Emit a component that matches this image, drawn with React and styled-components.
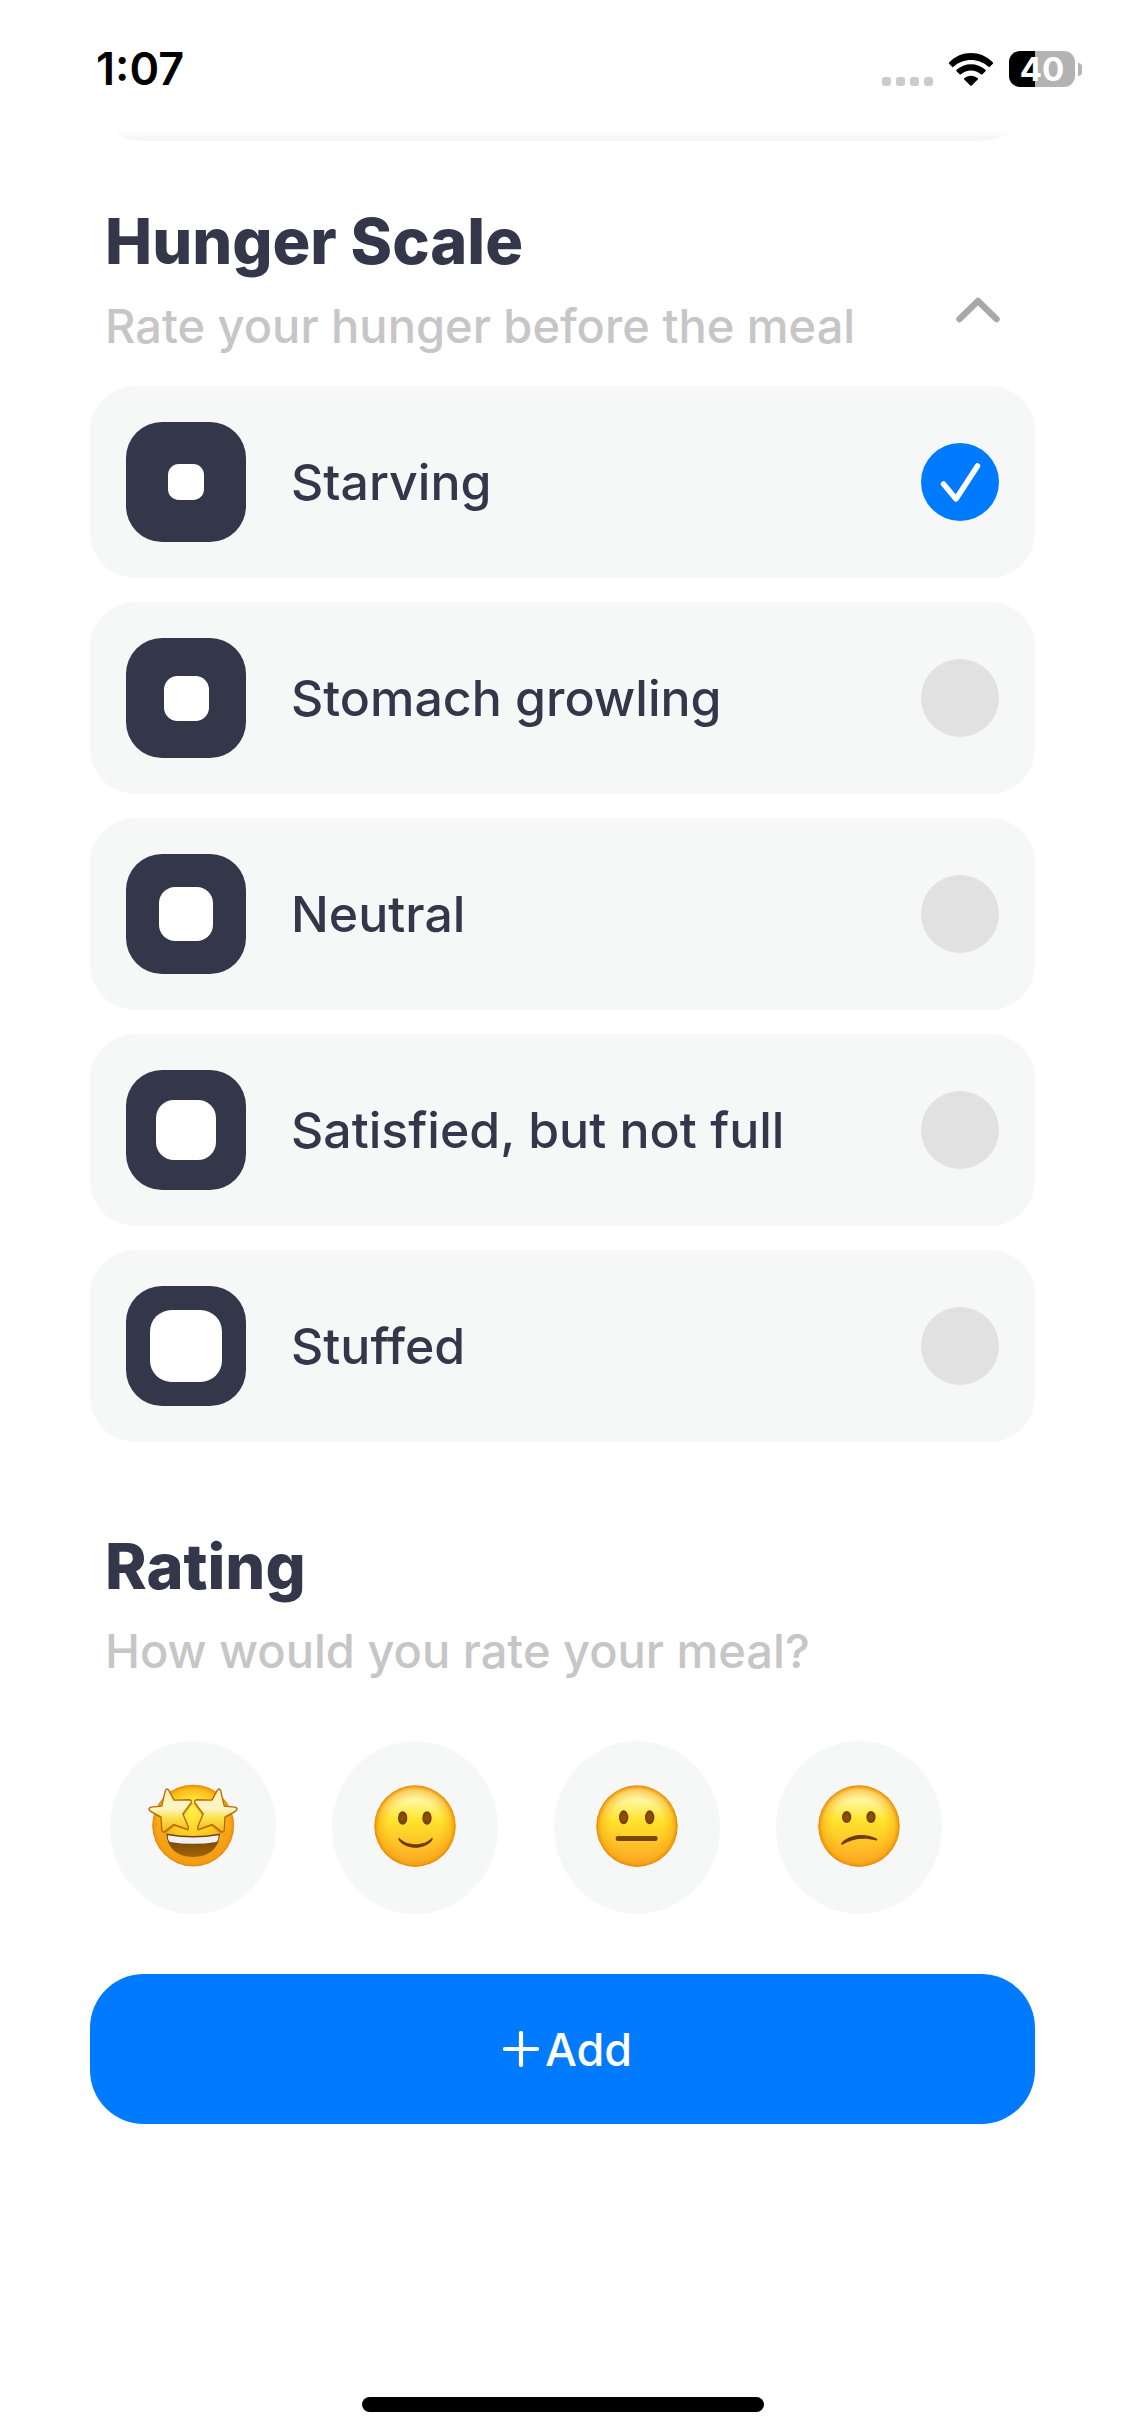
import React, { useState } from "react";
import styled, { createGlobalStyle } from "styled-components";

const colors = {
  ink: "#34364a",
  muted: "#c6c6c6",
  card: "#f6f8f8",
  off: "#e1e1e1",
  blue: "#007aff",
};

const GlobalStyle = createGlobalStyle`
  * {
    box-sizing: border-box;
  }
  body {
    margin: 0;
    background: #fff;
    font-family: Inter, "Liberation Sans", sans-serif;
    color: ${colors.ink};
  }
  button {
    font: inherit;
    border: 0;
    cursor: pointer;
  }
`;

const Screen = styled.div`
  display: flex;
  flex-direction: column;
  min-height: 100vh;
`;

const StatusBar = styled.header`
  display: flex;
  align-items: center;
  justify-content: space-between;
  padding: 36px 43px 30px 96px;
  color: #000;
`;

const Clock = styled.time`
  font-size: 45px;
  font-weight: 600;
  line-height: 66px;
`;

const StatusIcons = styled.div`
  display: flex;
  align-items: center;
  gap: 15px;
`;

const Signal = styled.div`
  display: flex;
  align-items: flex-end;
  gap: 5px;
  height: 33px;
`;

const SignalDot = styled.span`
  width: 9px;
  height: 9px;
  border-radius: 3px;
  background: #cbcbcb;
`;

const Battery = styled.div`
  display: flex;
  align-items: center;
  gap: 3px;
`;

const BatteryBody = styled.div`
  width: 66px;
  height: 36px;
  border-radius: 11px;
  background: linear-gradient(90deg, #000 ${(p) => p.$level}%, #b3b3b3 ${(p) => p.$level}%);
  color: #fff;
  font-size: 33px;
  font-weight: 700;
  line-height: 36px;
  text-align: center;
`;

const BatteryTip = styled.span`
  width: 4px;
  height: 13px;
  border-radius: 0 4px 4px 0;
  background: #b3b3b3;
`;

const Content = styled.main`
  display: flex;
  flex-direction: column;
  gap: 60px;
  padding: 0 90px;
`;

// bottom edge of the card that is scrolled under the status bar
const ScrolledCard = styled.div`
  height: 9px;
  overflow: hidden;
  display: flex;
  align-items: flex-end;

  &::before {
    content: "";
    flex: 1;
    height: 108px;
    border-radius: 54px;
    background: linear-gradient(0deg, ${colors.card} 4px, #fff 12px);
  }
`;

const Section = styled.section`
  display: flex;
  flex-direction: column;
  gap: ${(p) => p.$gap}px;
`;

const SectionHead = styled.div`
  display: flex;
  align-items: flex-end;
  justify-content: space-between;
  padding: 0 15px;
`;

const Headings = styled.div`
  display: flex;
  flex-direction: column;
  gap: 15px;
`;

const Title = styled.h2`
  margin: 0;
  font-size: 63px;
  font-weight: 800;
  line-height: 80px;
`;

const Subtitle = styled.p`
  margin: 0;
  font-size: 47px;
  font-weight: 500;
  line-height: 60px;
  color: ${colors.muted};
`;

const CollapseButton = styled.button`
  display: flex;
  align-items: center;
  justify-content: center;
  width: 84px;
  height: 92px;
  padding: 0;
  background: none;
  color: #a7a8ac;
`;

const Options = styled.div`
  display: flex;
  flex-direction: column;
  gap: 24px;
  margin-bottom: 24px;
`;

const Option = styled.label`
  display: flex;
  align-items: center;
  gap: 45px;
  padding: 36px;
  border-radius: 45px;
  background: ${colors.card};
  cursor: pointer;
`;

const LevelTile = styled.span`
  display: flex;
  align-items: center;
  justify-content: center;
  width: 120px;
  height: 120px;
  border-radius: 36px;
  background: ${colors.ink};

  &::before {
    content: "";
    width: ${(p) => p.$size}px;
    height: ${(p) => p.$size}px;
    border-radius: 30%;
    background: #fff;
  }
`;

const OptionName = styled.span`
  flex: 1;
  font-size: 50px;
  font-weight: 500;
  line-height: 66px;
`;

const RadioWrap = styled.span`
  display: grid;
  place-items: center;

  > * {
    grid-area: 1 / 1;
  }
`;

const Radio = styled.input`
  appearance: none;
  width: 78px;
  height: 78px;
  margin: 0;
  border-radius: 50%;
  background: ${colors.off};

  &:checked {
    background: ${colors.blue};
  }
`;

const Tick = styled.svg`
  width: 78px;
  height: 78px;
  pointer-events: none;
`;

const Ratings = styled.div`
  display: flex;
  gap: 56px;
  padding: 0 20px;
`;

const RatingButton = styled.button`
  display: flex;
  align-items: center;
  justify-content: center;
  width: 166px;
  height: 173px;
  padding: 0 0 4px;
  border-radius: 50%;
  background: ${colors.card};
`;

const AddButton = styled.button`
  display: flex;
  align-items: center;
  justify-content: center;
  gap: 6px;
  height: 150px;
  padding: 0 0 0 10px;
  border-radius: 54px;
  background: ${colors.blue};
  color: #fff;
  font-size: 45px;
  font-weight: 500;
`;

const HomeBar = styled.div`
  width: 402px;
  height: 15px;
  margin: auto auto 24px;
  border-radius: 8px;
  background: #000;
`;

const WifiIcon = () => (
  <svg width="46" height="33" viewBox="0 0 134 98" fill="#000" aria-hidden="true">
    <path d="M2 28Q0 30 2 32L11 41Q13 43 15 41C44 14 90 14 119 41Q121 43 123 41L132 32Q134 30 132 28C96 -9 38 -9 2 28Z" />
    <path d="M24 50Q22 52 24 54L33 63Q35 65 37 63C54 48 80 48 97 63Q99 65 101 63L110 54Q112 52 110 50C86 28 48 28 24 50Z" />
    <path d="M47 75Q45 77 47 79L64 96Q67 99 70 96L87 79Q89 77 87 75C76 65 58 65 47 75Z" />
  </svg>
);

const ChevronUp = () => (
  <svg width="44" height="26" viewBox="0 0 44 26" fill="none" aria-hidden="true">
    <path d="M3.5 22L22 4L40.5 22" stroke="currentColor" strokeWidth="6.5" strokeLinecap="round" strokeLinejoin="round" />
  </svg>
);

const PlusIcon = () => (
  <svg width="36" height="36" viewBox="0 0 36 36" aria-hidden="true">
    <path d="M18 2V34M2 18H34" stroke="currentColor" strokeWidth="4.2" strokeLinecap="round" />
  </svg>
);

const FaceGradients = () => (
  <svg width="0" height="0" display="block" aria-hidden="true">
    <defs>
      <linearGradient id="skin" x1="0" y1="0" x2="0" y2="1">
        <stop offset="0" stopColor="#fff9b8" />
        <stop offset="0.18" stopColor="#fff7a2" />
        <stop offset="0.42" stopColor="#ffe52e" />
        <stop offset="0.7" stopColor="#ffc426" />
        <stop offset="1" stopColor="#fda62c" />
      </linearGradient>
      <radialGradient id="rim">
        <stop offset="0.65" stopColor="#f9ab10" stopOpacity="0" />
        <stop offset="0.88" stopColor="#f9a812" stopOpacity="0.5" />
        <stop offset="0.96" stopColor="#f09a0e" stopOpacity="0.9" />
        <stop offset="1" stopColor="#e3830a" />
      </radialGradient>
      <radialGradient id="eye">
        <stop offset="0.2" stopColor="#935200" />
        <stop offset="1" stopColor="#6e3c04" />
      </radialGradient>
      <linearGradient id="star" x1="0" y1="0" x2="0" y2="1">
        <stop offset="0" stopColor="#ffeeb0" />
        <stop offset="0.45" stopColor="#fdf6c4" />
        <stop offset="0.7" stopColor="#fbde44" />
        <stop offset="1" stopColor="#f0b81c" />
      </linearGradient>
      <radialGradient id="glow" cx="0.5" cy="0.3" r="0.7">
        <stop offset="0" stopColor="#fff04a" />
        <stop offset="0.45" stopColor="#fbcf20" />
        <stop offset="0.7" stopColor="#f5a31a" />
        <stop offset="1" stopColor="#ee8a1a" />
      </radialGradient>
      <linearGradient id="mouth" x1="0" y1="0" x2="0" y2="1">
        <stop offset="0" stopColor="#6b3d00" />
        <stop offset="1" stopColor="#a26408" />
      </linearGradient>
    </defs>
  </svg>
);

const Face = ({ eyeX, eyeY, eyeR, children }) => (
  <svg width="82" height="82" viewBox="0 0 246 246" aria-hidden="true">
    <circle cx="123" cy="123" r="122" fill="url(#skin)" />
    <circle cx="123" cy="123" r="122" fill="url(#rim)" />
    {eyeX.map((x) => (
      <ellipse key={x} cx={x} cy={eyeY} rx="14" ry={eyeR} fill="url(#eye)" />
    ))}
    {children}
  </svg>
);

const SmileFace = () => (
  <Face eyeX={[86, 159]} eyeY={99} eyeR={20}>
    <path d="M75 158C98 184 151 184 174 158C177 160 176 164 173 168C150 195 99 195 76 168C73 164 72 160 75 158Z" fill="#6b3a02" />
  </Face>
);

const NeutralFace = () => (
  <Face eyeX={[83, 161]} eyeY={97} eyeR={21}>
    <rect x="59" y="153" width="126" height="15" rx="7" fill="#7b4503" />
  </Face>
);

const ConfusedFace = () => (
  <Face eyeX={[86, 159]} eyeY={96} eyeR={18}>
    <path d="M71 180C68 178 70 173 76 168C105 145 148 145 177 161C179 165 176 167 173 166C140 157 105 159 71 180Z" fill="#6b3a02" />
  </Face>
);

const starPath =
  "M52 19Q57 11 62 19L78 48L123 47Q133 49 128 57L104 89L120 127Q122 137 113 134L77 121L50 142Q42 146 41 137L39 99L8 82Q-3 74 9 69L41 66Z";

const StarFace = () => (
  <svg width="90" height="83" viewBox="0 0 269 248" aria-hidden="true">
    <circle cx="135" cy="124" r="122" fill="url(#glow)" />
    <circle cx="135" cy="124" r="122" fill="url(#rim)" />
    <path d="M55 148Q135 163 215 148C212 196 178 218 135 218C92 218 58 196 55 148Z" fill="url(#mouth)" />
    <path d="M59 153Q135 167 211 153Q211 168 204 173Q135 184 66 173Q59 168 59 153Z" fill="#f1f1f5" />
    <g fill="#8a4a00" opacity="0.35">
      <path d={starPath} transform="translate(3 5)" />
      <path d={starPath} transform="translate(266 5) scale(-1 1)" />
    </g>
    <g fill="url(#star)" stroke="#b8690c" strokeWidth="4" strokeLinejoin="round">
      <path d={starPath} />
      <path d={starPath} transform="translate(269 0) scale(-1 1)" />
    </g>
  </svg>
);

const hungerLevels = [
  { name: "Starving", size: 36 },
  { name: "Stomach growling", size: 45 },
  { name: "Neutral", size: 54 },
  { name: "Satisfied, but not full", size: 60 },
  { name: "Stuffed", size: 72 },
];

const ratings = [
  { name: "Amazing", Icon: StarFace },
  { name: "Good", Icon: SmileFace },
  { name: "Okay", Icon: NeutralFace },
  { name: "Bad", Icon: ConfusedFace },
];

const App = () => {
  const [hunger, setHunger] = useState("Starving");
  const [open, setOpen] = useState(true);

  return (
    <Screen>
      <GlobalStyle />
      <StatusBar>
        <Clock>1:07</Clock>
        <StatusIcons>
          <Signal>
            <SignalDot />
            <SignalDot />
            <SignalDot />
            <SignalDot />
          </Signal>
          <WifiIcon />
          <Battery>
            <BatteryBody $level={40}>40</BatteryBody>
            <BatteryTip />
          </Battery>
        </StatusIcons>
      </StatusBar>

      <Content>
        <ScrolledCard />

        <Section $gap={30}>
          <SectionHead>
            <Headings>
              <Title>Hunger Scale</Title>
              <Subtitle>Rate your hunger before the meal</Subtitle>
            </Headings>
            <CollapseButton aria-label="Toggle hunger scale" aria-expanded={open} onClick={() => setOpen(!open)}>
              <ChevronUp />
            </CollapseButton>
          </SectionHead>
          {open && (
            <Options role="radiogroup" aria-label="Hunger Scale">
              {hungerLevels.map(({ name, size }) => (
                <Option key={name}>
                  <LevelTile $size={size} />
                  <OptionName>{name}</OptionName>
                  <RadioWrap>
                    <Radio type="radio" name="hunger" checked={hunger === name} onChange={() => setHunger(name)} />
                    {hunger === name && (
                      <Tick viewBox="0 0 78 78" fill="none" aria-hidden="true">
                        <path d="M22.5 41L35 56L56.5 23" stroke="#fff" strokeWidth="5.5" strokeLinecap="round" strokeLinejoin="round" />
                      </Tick>
                    )}
                  </RadioWrap>
                </Option>
              ))}
            </Options>
          )}
        </Section>

        <Section $gap={60}>
          <SectionHead>
            <Headings>
              <Title>Rating</Title>
              <Subtitle>How would you rate your meal?</Subtitle>
            </Headings>
          </SectionHead>
          <Ratings>
            {ratings.map(({ name, Icon }) => (
              <RatingButton key={name} aria-label={name}>
                <Icon />
              </RatingButton>
            ))}
          </Ratings>
        </Section>

        <AddButton>
          <PlusIcon />
          Add
        </AddButton>
      </Content>

      <HomeBar />
      <FaceGradients />
    </Screen>
  );
};

export default App;
